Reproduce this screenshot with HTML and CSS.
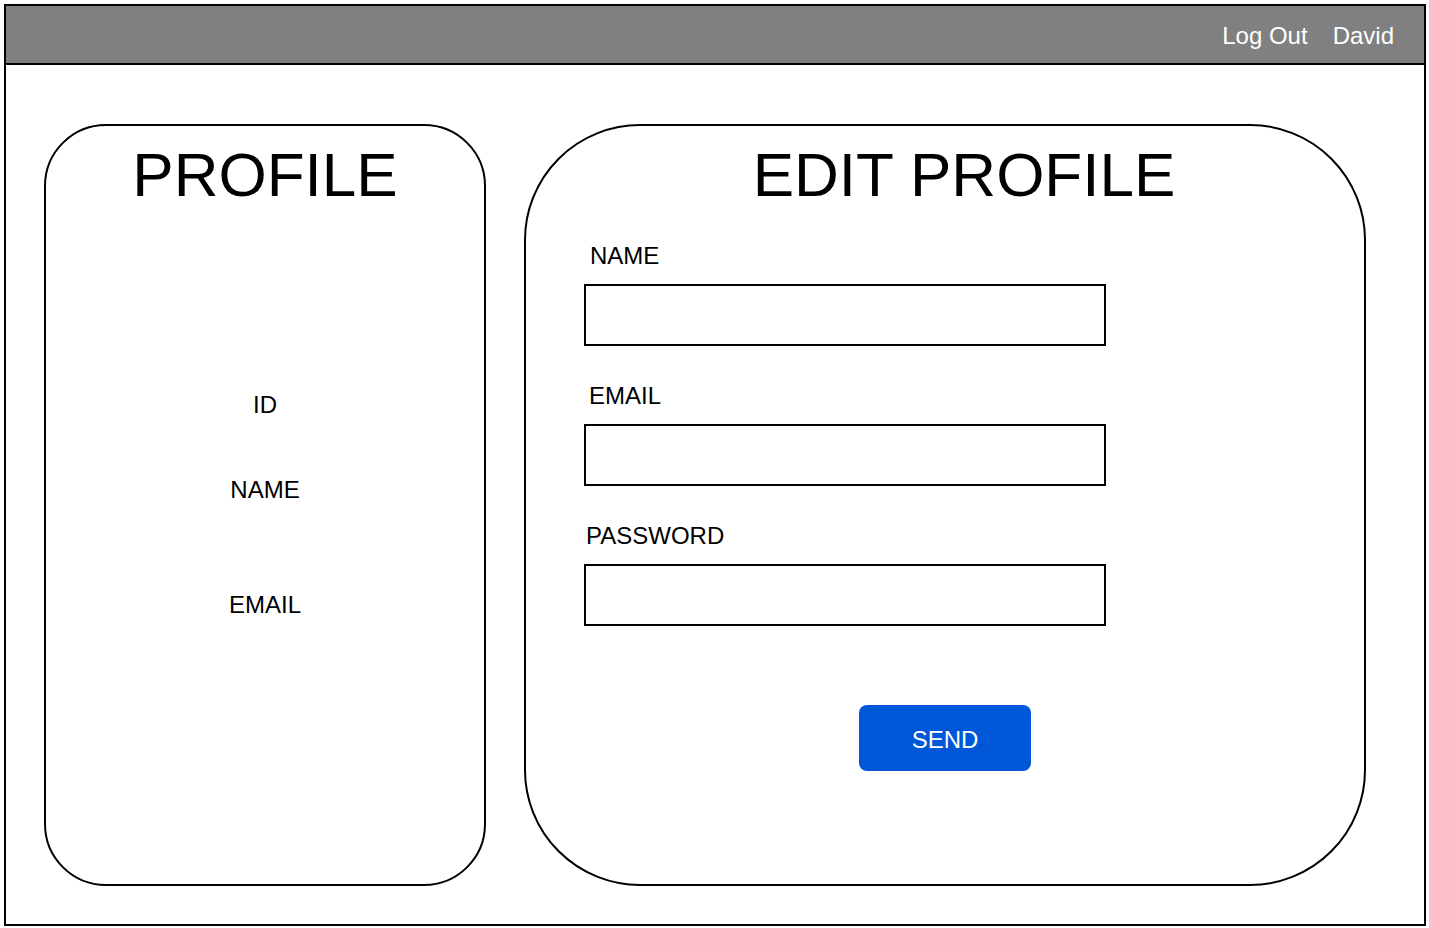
FILE: index.html
```html
<!DOCTYPE html>
<html lang="en">
<head>
<meta charset="utf-8">
<title>Profile</title>
<link rel="stylesheet" href="styles.css">
</head>
<body>
<div class="frame">
  <header class="topbar">
    <a class="topbar-link" href="#">Log Out</a>
    <span class="topbar-user">David</span>
  </header>
  <main class="content">
    <section class="card card-profile">
      <h1 class="card-title">PROFILE</h1>
      <div class="info info-id">ID</div>
      <div class="info info-name">NAME</div>
      <div class="info info-email">EMAIL</div>
    </section>
    <section class="card card-edit">
      <h1 class="card-title card-title-edit">EDIT PROFILE</h1>
      <form class="form">
        <div class="field">
          <label class="field-label label-name">NAME</label>
          <input class="field-input" type="text">
        </div>
        <div class="field">
          <label class="field-label label-email">EMAIL</label>
          <input class="field-input" type="text">
        </div>
        <div class="field">
          <label class="field-label label-password">PASSWORD</label>
          <input class="field-input" type="password">
        </div>
        <div class="actions">
          <button class="send-btn" type="button">SEND</button>
        </div>
      </form>
    </section>
  </main>
</div>
</body>
</html>
```

FILE: styles.css
```css
* {
  box-sizing: border-box;
}

html, body {
  margin: 0;
  padding: 0;
  background: #ffffff;
}

body {
  font-family: "Liberation Sans", Arial, sans-serif;
  color: #000000;
}

.frame {
  margin: 4px;
  width: 1422px;
  height: 922px;
  border: 2px solid #000000;
  display: flex;
  flex-direction: column;
}

.topbar {
  height: 59px;
  background: #808080;
  border-bottom: 2px solid #000000;
  display: flex;
  justify-content: flex-end;
  align-items: center;
  gap: 25px;
  padding-right: 30px;
  padding-top: 2px;
  font-size: 24px;
  line-height: 24px;
}

.topbar-link,
.topbar-user {
  color: #ffffff;
  text-decoration: none;
}

.content {
  display: flex;
  gap: 38px;
  padding: 59px 0 0 38px;
}

.card {
  height: 762px;
  border: 2px solid #000000;
  display: flex;
  flex-direction: column;
}

.card-profile {
  width: 442px;
  border-radius: 62px;
  align-items: center;
}

.card-edit {
  width: 842px;
  border-radius: 116px;
}

.card-title {
  margin: 18px 0 0 0;
  font-size: 62px;
  line-height: 62px;
  font-weight: normal;
  text-align: center;
}

.card-title-edit {
  padding-left: 38px;
}

.info {
  font-size: 24px;
  line-height: 24px;
}

.info-id {
  margin-top: 187px;
}

.info-name {
  margin-top: 61px;
}

.info-email {
  margin-top: 91px;
}

.form {
  display: flex;
  flex-direction: column;
  gap: 38px;
  margin-top: 38px;
  padding-left: 58px;
}

.field {
  display: flex;
  flex-direction: column;
  gap: 16px;
}

.field-label {
  font-size: 24px;
  line-height: 24px;
}

.label-name {
  padding-left: 6px;
}

.label-email {
  padding-left: 5px;
}

.label-password {
  padding-left: 2px;
}

.field-input {
  width: 522px;
  height: 62px;
  border: 2px solid #000000;
  border-radius: 0;
  margin: 0;
  padding: 0 10px;
  font-family: inherit;
  font-size: 20px;
  background: #ffffff;
  outline: none;
}

.actions {
  display: flex;
  justify-content: center;
  margin-top: 41px;
  margin-left: -58px;
}

.send-btn {
  width: 172px;
  height: 66px;
  border: none;
  border-radius: 8px;
  background: #0057d8;
  color: #ffffff;
  font-family: inherit;
  font-size: 24px;
  line-height: 24px;
  padding: 4px 0 0 0;
  cursor: pointer;
}
```
